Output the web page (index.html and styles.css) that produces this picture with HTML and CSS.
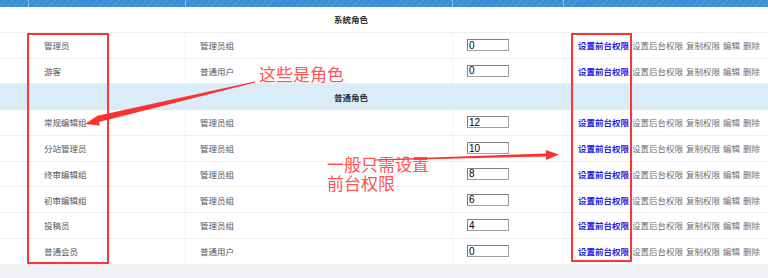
FILE: index.html
```html
<!DOCTYPE html>
<html lang="zh-CN">
  <head>
    <meta charset="UTF-8" />
    <meta name="viewport" content="width=device-width, initial-scale=1.0" />
    <title>角色管理</title>
    <link rel="stylesheet" href="styles.css">
  </head>
  <body>
    <div class="roles">
      <div class="line head">
        <div class="cell"></div>
        <div class="cell"></div>
        <div class="cell"></div>
        <div class="cell"></div>
        <div class="cell"></div>
      </div>

      <div class="group">系统角色</div>
      <div class="line">
        <div class="cell"></div>
        <div class="cell name">管理员</div>
        <div class="cell type">管理员组</div>
        <div class="cell order"><input class="sort" type="text" value="0"></div>
        <div class="cell ops"><a class="front">设置前台权限</a><a>设置后台权限</a><a>复制权限</a><a>编辑</a><a>删除</a></div>
      </div>
      <div class="line">
        <div class="cell"></div>
        <div class="cell name">游客</div>
        <div class="cell type">普通用户</div>
        <div class="cell order"><input class="sort" type="text" value="0"></div>
        <div class="cell ops"><a class="front">设置前台权限</a><a>设置后台权限</a><a>复制权限</a><a>编辑</a><a>删除</a></div>
      </div>

      <div class="group blue">普通角色</div>
      <div class="line">
        <div class="cell"></div>
        <div class="cell name">常规编辑组</div>
        <div class="cell type">管理员组</div>
        <div class="cell order"><input class="sort" type="text" value="12"></div>
        <div class="cell ops"><a class="front">设置前台权限</a><a>设置后台权限</a><a>复制权限</a><a>编辑</a><a>删除</a></div>
      </div>
      <div class="line">
        <div class="cell"></div>
        <div class="cell name">分站管理员</div>
        <div class="cell type">管理员组</div>
        <div class="cell order"><input class="sort" type="text" value="10"></div>
        <div class="cell ops"><a class="front">设置前台权限</a><a>设置后台权限</a><a>复制权限</a><a>编辑</a><a>删除</a></div>
      </div>
      <div class="line">
        <div class="cell"></div>
        <div class="cell name">终审编辑组</div>
        <div class="cell type">管理员组</div>
        <div class="cell order"><input class="sort" type="text" value="8"></div>
        <div class="cell ops"><a class="front">设置前台权限</a><a>设置后台权限</a><a>复制权限</a><a>编辑</a><a>删除</a></div>
      </div>
      <div class="line">
        <div class="cell"></div>
        <div class="cell name">初审编辑组</div>
        <div class="cell type">管理员组</div>
        <div class="cell order"><input class="sort" type="text" value="6"></div>
        <div class="cell ops"><a class="front">设置前台权限</a><a>设置后台权限</a><a>复制权限</a><a>编辑</a><a>删除</a></div>
      </div>
      <div class="line">
        <div class="cell"></div>
        <div class="cell name">投稿员</div>
        <div class="cell type">管理员组</div>
        <div class="cell order"><input class="sort" type="text" value="4"></div>
        <div class="cell ops"><a class="front">设置前台权限</a><a>设置后台权限</a><a>复制权限</a><a>编辑</a><a>删除</a></div>
      </div>
      <div class="line">
        <div class="cell"></div>
        <div class="cell name">普通会员</div>
        <div class="cell type">普通用户</div>
        <div class="cell order"><input class="sort" type="text" value="0"></div>
        <div class="cell ops"><a class="front">设置前台权限</a><a>设置后台权限</a><a>复制权限</a><a>编辑</a><a>删除</a></div>
      </div>
    </div>

    <!-- annotations drawn over the screenshot -->
    <div class="mark mark-roles"></div>
    <div class="mark mark-front"></div>
    <div class="note note-roles">这些是角色</div>
    <div class="note note-front">一般只需设置<br>前台权限</div>
    <svg class="arrows" width="768" height="278" viewBox="0 0 768 278">
      <polygon points="255.1,82.5 254.9,81.5 97.4,115.8 85,124 99.8,125.5 98.9,122.1" />
      <polygon points="375,159.5 375,160.5 546.1,156.4 546.2,159.9 559,154.5 545.8,149.9 546,153.4" />
    </svg>
  </body>
</html>
```

FILE: styles.css
```css
* {
  margin: 0;
  padding: 0;
  box-sizing: border-box;
}
body {
  width: 768px;
  height: 278px;
  background: #f0f1f5;
  font-family: "Noto Sans CJK SC", "Liberation Sans", sans-serif;
  font-size: 8.5px;
  color: #555;
  position: relative;
  overflow: hidden;
}
.roles {
  width: 768px;
  background: #fff;
}
.line {
  display: grid;
  grid-template-columns: 29px 157px 267px 111px 1fr;
  height: 25.75px;
  border-bottom: 1px solid #eeeeee;
}
.line .cell {
  display: flex;
  align-items: center;
  border-right: 1px solid #f2f2f2;
}
.line .cell:last-child {
  border-right: none;
}
.head {
  height: 7px;
  border-bottom: none;
  background: repeating-linear-gradient(135deg, #3a8ed6 0, #3a8ed6 3px, #4495da 3px, #4495da 5px);
}
.head .cell {
  border-right: 1px solid #8fc0ea;
}
.group {
  height: 25.75px;
  display: flex;
  align-items: center;
  justify-content: center;
  padding-right: 66px;
  font-weight: bold;
  color: #333;
  border-bottom: 1px solid #eeeeee;
}
.group.blue {
  background: #d9ecf8;
  border-bottom: none;
}
.name {
  padding-left: 15px;
}
.type {
  padding-left: 14px;
}
.order {
  padding-left: 14px;
}
.sort {
  width: 42px;
  height: 12px;
  border: 1px solid #a0a0a0;
  border-top-color: #808080;
  border-left-color: #808080;
  font-family: "Liberation Sans", sans-serif;
  font-size: 10px;
  padding: 0 1px;
  color: #000;
  background: #fff;
}
.ops {
  padding-left: 14px;
  gap: 3px;
}
.ops a {
  color: #707070;
  white-space: nowrap;
}
.ops a.front {
  color: #2323e6;
  font-weight: bold;
}
.mark {
  position: absolute;
  border: 2px solid #ff3434;
}
.mark-roles {
  left: 27px;
  top: 33px;
  width: 82px;
  height: 231px;
}
.mark-front {
  left: 571px;
  top: 33px;
  width: 61px;
  height: 229px;
}
.note {
  position: absolute;
  color: #ff5555;
  font-size: 17px;
  line-height: 19px;
  white-space: nowrap;
}
.note-roles {
  left: 259px;
  top: 64px;
}
.note-front {
  left: 327px;
  top: 154px;
}
.arrows {
  position: absolute;
  left: 0;
  top: 0;
  pointer-events: none;
}
.arrows polygon {
  fill: #ff3030;
}
```
